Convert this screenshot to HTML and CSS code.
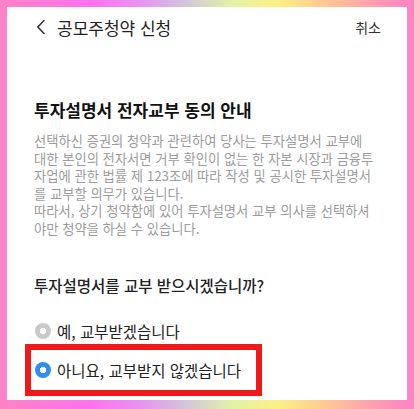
FILE: index.html
```html
<!DOCTYPE html>
<html lang="ko">
<head>
<meta charset="utf-8">
<title>공모주청약 신청</title>
<link rel="stylesheet" href="styles.css">
</head>
<body>
<div class="frame">
  <div class="screen">
    <header class="topbar">
      <div class="topbar-left">
        <svg class="back" width="10" height="16" viewBox="0 0 10 16" aria-hidden="true">
          <path d="M8 1.5 L1.8 8 L8 14.5" fill="none" stroke="#333" stroke-width="1.6" stroke-linecap="round" stroke-linejoin="round"/>
        </svg>
        <span class="page-title">공모주청약 신청</span>
      </div>
      <span class="cancel">취소</span>
    </header>

    <section class="notice">
      <h1 class="notice-title">투자설명서 전자교부 동의 안내</h1>
      <p class="notice-body">선택하신 증권의 청약과 관련하여 당사는 투자설명서 교부에 대한 본인의 전자서면 거부 확인이 없는 한 자본 시장과 금융투자업에 관한 법률 제 123조에 따라 작성 및 공시한 투자설명서를 교부할 의무가 있습니다.<br>따라서, 상기 청약함에 있어 투자설명서 교부 의사를 선택하셔야만 청약을 하실 수 있습니다.</p>
    </section>

    <section class="question">
      <h2 class="question-title">투자설명서를 교부 받으시겠습니까?</h2>
      <div class="option">
        <span class="radio radio-off"></span>
        <span class="option-label">예, 교부받겠습니다</span>
      </div>
      <div class="option option-marked">
        <span class="radio radio-on"></span>
        <span class="option-label">아니요, 교부받지 않겠습니다</span>
      </div>
    </section>
  </div>
</div>
</body>
</html>
```

FILE: styles.css
```css
* { box-sizing: border-box; }
html, body { margin: 0; padding: 0; }
body {
  width: 414px;
  height: 409px;
  overflow: hidden;
  font-family: "Noto Sans CJK KR", "Noto Sans", Roboto, sans-serif;
}
.frame {
  width: 414px;
  height: 409px;
  padding: 7px 7px 9px 7px;
  background:
    linear-gradient(90deg,
      #ff82c6 0%,
      #ff72f0 22%,
      #e892f2 34%,
      #d2c2dc 44%,
      #e2f2a6 56%,
      #fcf084 67%,
      #ffc494 80%,
      #ff98b4 92%,
      #ff82c6 100%);
}
.screen {
  background: #fff;
  height: 100%;
  display: flex;
  flex-direction: column;
}
.topbar {
  height: 40px;
  display: flex;
  align-items: center;
  justify-content: space-between;
  padding: 0 26px 0 29px;
}
.topbar-left {
  display: flex;
  align-items: center;
  gap: 11px;
}
.back { display: block; }
.page-title {
  font-size: 17px;
  color: #222;
}
.cancel {
  font-size: 14px;
  color: #333;
}
.notice {
  padding: 0 31px 0 27px;
  margin-top: 51px;
}
.notice-title {
  margin: 0;
  font-size: 17px;
  line-height: 24px;
  font-weight: 700;
  color: #111;
}
.notice-body {
  margin: 10px 0 0 0;
  font-size: 13.3px;
  line-height: 17.6px;
  color: #9c9c9c;
  word-break: break-all;
}
.question {
  margin-top: 37px;
}
.question-title {
  margin: 0 0 24px 27px;
  font-size: 15.5px;
  line-height: 20px;
  font-weight: 500;
  color: #222;
}
.option {
  display: flex;
  align-items: center;
  gap: 6px;
  height: 24px;
  margin-left: 28px;
}
.option-marked {
  margin: 1px 0 0 18px;
  width: 237px;
  height: 52px;
  border: 6px solid #f01818;
  padding-left: 4px;
}
.option-label {
  font-size: 15.5px;
  color: #222;
}
.radio {
  width: 16px;
  height: 16px;
  border-radius: 50%;
  display: inline-block;
  flex: none;
}
.radio-off {
  background: radial-gradient(circle, #fff 0 3px, #c9c9c9 3.5px);
}
.radio-on {
  background: radial-gradient(circle, #fff 0 3px, #2f8ef2 3.5px);
}
```
